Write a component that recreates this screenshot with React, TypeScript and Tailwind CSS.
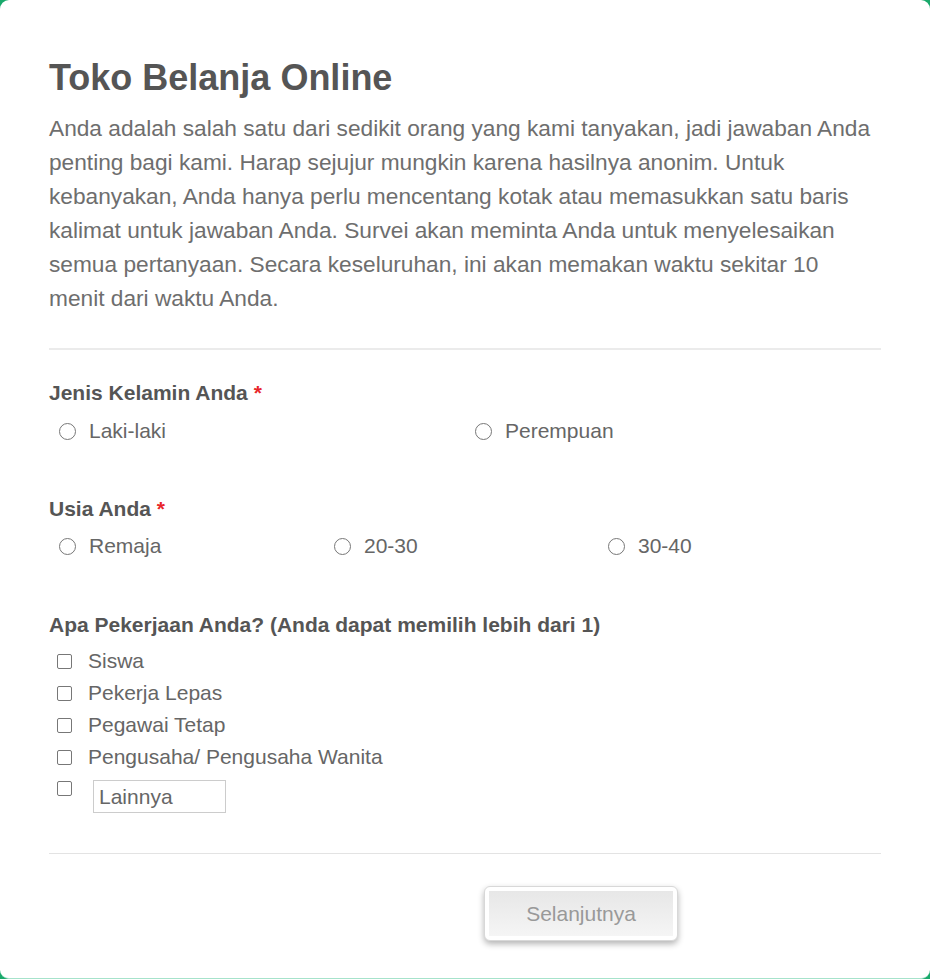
import React from "react";

const Radio = ({ label }: { label: string }) => (
  <label className="flex h-[30px] items-center gap-[13px] pl-[10px]">
    <span className="h-[17px] w-[17px] rounded-full border-[1.5px] border-[#777]" />
    <span className="text-[21px] text-[#666]">{label}</span>
  </label>
);

const Check = ({ label }: { label: string }) => (
  <label className="flex h-[32px] items-center gap-[16px] pl-[8px]">
    <span className="h-[15px] w-[15px] rounded-[2px] border-[1.5px] border-[#777]" />
    <span className="text-[21px] text-[#666]">{label}</span>
  </label>
);

const App = () => {
  return (
    <div className="h-[979px] w-full bg-[#19a96b]" style={{ fontFamily: '"Liberation Sans", Arial, sans-serif' }}>
      <div className="h-[979px] rounded-[9px] border-b border-[#a6e3cb] bg-white px-[49px] pt-[56px]">
        {/* Header */}
        <h1 className="text-[36px] font-bold leading-[44px] text-[#555]">Toko Belanja Online</h1>
        <p className="mt-[11px] pr-[4px] text-[22.7px] leading-[34px] text-[#6e6e6e]">
          Anda adalah salah satu dari sedikit orang yang kami tanyakan, jadi jawaban Anda penting bagi kami. Harap
          sejujur mungkin karena hasilnya anonim. Untuk kebanyakan, Anda hanya perlu mencentang kotak atau memasukkan
          satu baris kalimat untuk jawaban Anda. Survei akan meminta Anda untuk menyelesaikan semua pertanyaan. Secara
          keseluruhan, ini akan memakan waktu sekitar 10 menit dari waktu Anda.
        </p>

        <div className="mt-[33px] h-[2px] bg-[#ebebeb]" />

        {/* Gender */}
        <div className="mt-[30px]">
          <div className="text-[21px] font-bold leading-[26px] text-[#555]">
            Jenis Kelamin Anda <span className="text-[#e8262b]">*</span>
          </div>
          <div className="mt-[10px] grid grid-cols-2">
            <Radio label="Laki-laki" />
            <Radio label="Perempuan" />
          </div>
        </div>

        {/* Age */}
        <div className="mt-[50px]">
          <div className="text-[21px] font-bold leading-[26px] text-[#555]">
            Usia Anda <span className="text-[#e8262b]">*</span>
          </div>
          <div className="mt-[9px] grid grid-cols-[275px_274px_1fr]">
            <Radio label="Remaja" />
            <Radio label="20-30" />
            <Radio label="30-40" />
          </div>
        </div>

        {/* Occupation */}
        <div className="mt-[51px]">
          <div className="text-[21px] font-bold leading-[26px] text-[#555]">
            Apa Pekerjaan Anda? (Anda dapat memilih lebih dari 1)
          </div>
          <div className="mt-[7px] flex flex-col">
            <Check label="Siswa" />
            <Check label="Pekerja Lepas" />
            <Check label="Pegawai Tetap" />
            <Check label="Pengusaha/ Pengusaha Wanita" />
            <div className="flex items-start gap-[21px] pl-[8px] pt-[7px]">
              <span className="mt-[1px] h-[15px] w-[15px] rounded-[2px] border-[1.5px] border-[#777]" />
              <input
                className="h-[33px] w-[133px] border border-[#ccc] px-[5px] text-[21px] text-[#555] placeholder:text-[#666] outline-none"
                placeholder="Lainnya"
              />
            </div>
          </div>
        </div>

        <div className="mt-[40px] h-[1px] bg-[#e3e3e3]" />

        {/* Footer */}
        <div className="mt-[32px] flex">
          <button className="ml-[435px] rounded-[6px] border border-[#d8d8d8] bg-white p-[4px] shadow-[0_3px_6px_rgba(0,0,0,0.3)]">
            <span className="block h-[45px] w-[184px] bg-gradient-to-b from-[#e7e7e7] to-[#f5f5f5] text-[21px] leading-[45px] text-[#999]">
              Selanjutnya
            </span>
          </button>
        </div>
      </div>
    </div>
  );
};

export default App;
